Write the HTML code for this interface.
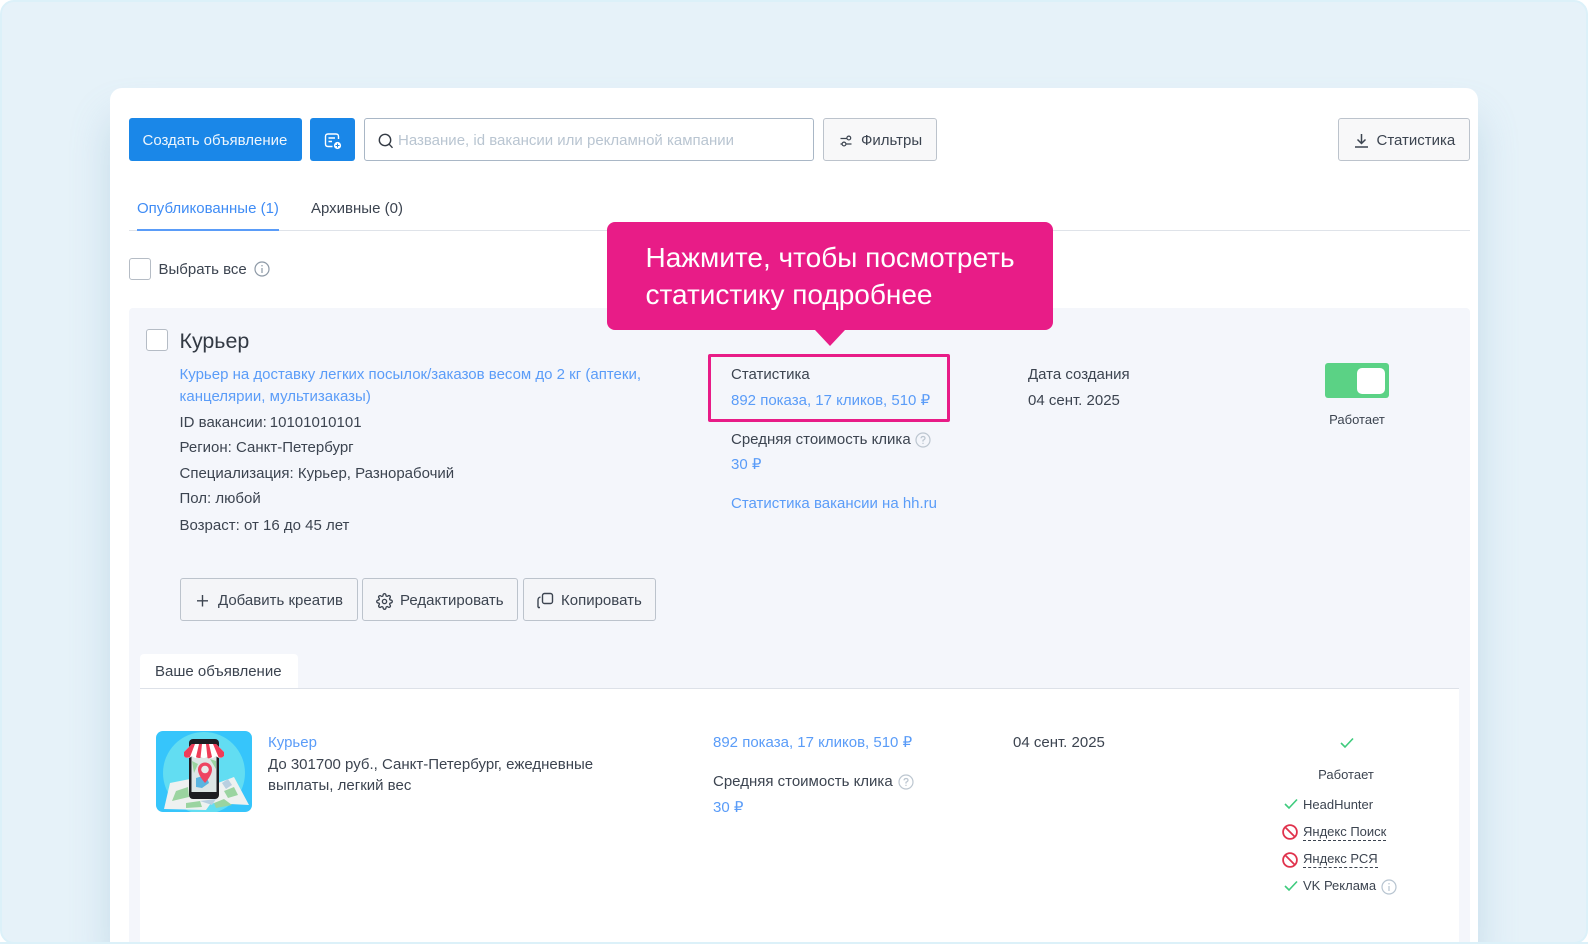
<!DOCTYPE html>
<html lang="ru"><head><meta charset="utf-8"><title>Объявления</title>
<style>
html,body{margin:0;padding:0;width:1588px;height:944px;overflow:hidden;background:#fff}
#root{position:relative;width:1588px;height:944px;overflow:hidden;background:#fff;font-family:"Liberation Sans",Arial,sans-serif;color:#3c4450;font-size:15px}
#bg{position:absolute;left:0;top:0;width:1584px;height:940px;border:2px solid #dcf1f9;border-radius:14px;background:#e6f2f9}
#card{position:absolute;left:110px;top:88px;width:1368px;height:854px;background:#fff;border-radius:12px 12px 0 0;box-shadow:0 30px 40px rgba(120,170,200,.3);clip-path:inset(-60px -60px 0 -60px)}
.t{position:absolute;white-space:nowrap;line-height:20px}
.l{color:#5a9cf8}
.s{font-size:13px}
.a{position:absolute;box-sizing:border-box}
.btn{position:absolute;box-sizing:border-box;border:1px solid #bcc3cc;border-radius:3px;background:#f8f8f9}
.blue{background:#1a87e8;border-radius:3px;position:absolute}
.cb{position:absolute;box-sizing:border-box;width:22px;height:22px;border:1px solid #b5bcc5;border-radius:3px;background:#fff}
svg{position:absolute;overflow:visible}
</style></head><body><div id="root">
<div id="bg"></div>
<div id="card"></div>

<div class="blue" style="left:129px;top:118px;width:173px;height:43px"></div>
<div class="t" style="left:142.5px;top:131px;color:#eef6fd">Создать объявление</div>
<div class="blue" style="left:310px;top:118px;width:45px;height:43px"></div>
<svg style="left:324px;top:133px" width="20" height="18" viewBox="0 0 20 18" fill="none" stroke="#fff" stroke-width="1.4"><path d="M14.5 6V3.5Q14.5 1 12 1H4Q1.500 1 1.500 3.500V11Q1.500 13.500 4 13.500H8.500"/><path d="M4.500 5H11M4.500 8.500H8"/><circle cx="13.500" cy="12.500" r="3.600" fill="#fff" stroke="none"/><path d="M13.500 10.500v4M11.500 12.500h4" stroke="#1a87e8" stroke-width="1"/></svg>

<div class="a" style="left:364px;top:118px;width:450px;height:43px;border:1px solid #a9b7c6;border-radius:3px;background:#fff"></div>
<svg style="left:378px;top:133px" width="16" height="16" viewBox="0 0 16 16" fill="none" stroke="#333a44" stroke-width="1.400"><circle cx="7" cy="7" r="5.700"/><path d="M11.200 11.200L14.500 14.800"/></svg>
<div class="t" style="left:398px;top:131px;color:#b9c5d1">Название, id вакансии или рекламной кампании</div>

<div class="btn" style="left:823px;top:118px;width:114px;height:43px"></div>
<svg style="left:840px;top:135px" width="12" height="12" viewBox="0 0 12 12" fill="none" stroke="#3c4450" stroke-width="1.200"><path d="M0.500 3.500H6.500M0.500 9H2M6 9H11.500"/><circle cx="8.800" cy="3" r="1.900"/><circle cx="4" cy="9" r="1.900"/></svg>
<div class="t" style="left:861px;top:131px">Фильтры</div>

<div class="btn" style="left:1338px;top:118px;width:132px;height:43px"></div>
<svg style="left:1354px;top:133px" width="15" height="15" viewBox="0 0 15 15" fill="none" stroke="#3c4450" stroke-width="1.500"><path d="M7.500 1V10M3.500 6.500L7.500 10.500L11.500 6.500M1 14H14"/></svg>
<div class="t" style="left:1376.500px;top:131px">Статистика</div>

<div class="t" style="left:137px;top:199px;color:#3f8cf5">Опубликованные (1)</div>
<div class="t" style="left:311px;top:199px">Архивные (0)</div>
<div class="a" style="left:129px;top:230px;width:1341px;height:1px;background:#dfe3e9"></div>
<div class="a" style="left:137px;top:229px;width:142px;height:2px;background:#5a9cf8"></div>

<div class="cb" style="left:129px;top:258px"></div>
<div class="t" style="left:158.500px;top:260px">Выбрать все</div>
<svg style="left:254px;top:261px" width="16" height="16" viewBox="0 0 16 16" fill="none" stroke="#8d99a6" stroke-width="1.200"><circle cx="8" cy="8" r="7"/><path d="M8 7V12M8 4V5.400"/></svg>

<div class="a" style="left:129px;top:308px;width:1341px;height:636px;background:#f4f6fb;border-radius:4px 4px 0 0"></div>
<div class="a" style="left:607px;top:222px;width:446px;height:108px;background:#e81c87;border-radius:8px"></div>
<svg style="left:815px;top:330px" width="30" height="16" viewBox="0 0 30 16"><path d="M0 0H30L15 16Z" fill="#e81c87"/></svg>
<div class="t" style="left:645.500px;top:240px;color:#fff;font-size:28px;line-height:36.500px">Нажмите, чтобы посмотреть<br>статистику подробнее</div>

<div class="cb" style="left:146px;top:329px"></div>
<div class="t" style="left:179.500px;top:330.500px;font-size:21.400px;color:#333a44">Курьер</div>
<div class="t l" style="left:179.500px;top:364px;line-height:22px">Курьер на доставку легких посылок/заказов весом до 2 кг (аптеки,<br>канцелярии, мультизаказы)</div>
<div class="t" style="left:179.500px;top:413px">ID вакансии:<span style="margin-left:3px">10101010101</span></div>
<div class="t" style="left:179.500px;top:438px">Регион: Санкт-Петербург</div>
<div class="t" style="left:179.500px;top:464px">Специализация: Курьер, Разнорабочий</div>
<div class="t" style="left:179.500px;top:489px">Пол: любой</div>
<div class="t" style="left:179.500px;top:516px">Возраст: от 16 до 45 лет</div>

<div class="a" style="left:708px;top:354px;width:242px;height:68px;border:3px solid #e81c87;border-radius:2px"></div>
<div class="t" style="left:731px;top:365px">Статистика</div>
<div class="t l" style="left:731px;top:391px">892 показа, 17 кликов, 510 ₽</div>
<div class="t" style="left:731px;top:430px">Средняя стоимость клика</div>
<svg style="left:915px;top:432px" width="16" height="16" viewBox="0 0 16 16" fill="none" stroke="#bcc6d0" stroke-width="1.200"><circle cx="8" cy="8" r="7"/><path d="M6 6.300Q6.200 4.500 8 4.500Q10 4.500 10 6.200Q10 7.300 8 8.300V9.600M8 10.800V12"/></svg>
<div class="t l" style="left:731px;top:455px">30 ₽</div>
<div class="t l" style="left:731px;top:494px">Статистика вакансии на hh.ru</div>
<div class="t" style="left:1028px;top:365px">Дата создания</div>
<div class="t" style="left:1028px;top:391px">04 сент. 2025</div>

<div class="a" style="left:1325px;top:363px;width:64px;height:35px;background:#5bd285;border-radius:3px"></div>
<div class="a" style="left:1357px;top:368px;width:28px;height:26px;background:#fff;border-radius:5px"></div>
<div class="t s" style="left:1319px;width:76px;text-align:center;top:410px">Работает</div>

<div class="btn" style="left:180px;top:578px;width:178px;height:43px;background:#f4f5f8"></div>
<svg style="left:196px;top:594px" width="13" height="13" viewBox="0 0 13 13" stroke="#3c4450" stroke-width="1.400"><path d="M6.500 1V12.500M1 6.800H12"/></svg>
<div class="t" style="left:218px;top:591px">Добавить креатив</div>
<div class="btn" style="left:362px;top:578px;width:156px;height:43px;background:#f4f5f8"></div>
<svg style="left:376px;top:593px" width="17" height="17" viewBox="0 0 24 24" fill="none" stroke="#3c4450" stroke-width="1.900"><circle cx="12" cy="12" r="3"/><path d="M19.400 15a1.650 1.650 0 0 0 .33 1.820l.06.06a2 2 0 0 1 0 2.830 2 2 0 0 1-2.830 0l-.06-.06a1.650 1.650 0 0 0-1.820-.33 1.650 1.650 0 0 0-1 1.510V21a2 2 0 0 1-2 2 2 2 0 0 1-2-2v-.09A1.650 1.650 0 0 0 9 19.400a1.650 1.650 0 0 0-1.820.33l-.06.06a2 2 0 0 1-2.830 0 2 2 0 0 1 0-2.830l.06-.06a1.650 1.650 0 0 0 .33-1.820 1.650 1.650 0 0 0-1.510-1H3a2 2 0 0 1-2-2 2 2 0 0 1 2-2h.09A1.650 1.650 0 0 0 4.600 9a1.650 1.650 0 0 0-.33-1.820l-.06-.06a2 2 0 0 1 0-2.830 2 2 0 0 1 2.830 0l.06.06a1.650 1.650 0 0 0 1.820.33H9a1.650 1.650 0 0 0 1-1.510V3a2 2 0 0 1 2-2 2 2 0 0 1 2 2v.09a1.650 1.650 0 0 0 1 1.510 1.650 1.650 0 0 0 1.820-.33l.06-.06a2 2 0 0 1 2.830 0 2 2 0 0 1 0 2.830l-.06.06a1.650 1.650 0 0 0-.33 1.820V9a1.650 1.650 0 0 0 1.510 1H21a2 2 0 0 1 2 2 2 2 0 0 1-2 2h-.09a1.650 1.650 0 0 0-1.510 1z"/></svg>
<div class="t" style="left:400px;top:591px">Редактировать</div>
<div class="btn" style="left:523px;top:578px;width:133px;height:43px;background:#f4f5f8"></div>
<svg style="left:537px;top:592px" width="17" height="17" viewBox="0 0 17 17" fill="none" stroke="#3c4450" stroke-width="1.400"><rect x="5.500" y="1.500" width="10" height="10" rx="2"/><path d="M3.500 5Q1 5.500 1 8V15.500M1 15.500H3"/></svg>
<div class="t" style="left:561px;top:591px">Копировать</div>

<div class="a" style="left:140px;top:654px;width:158px;height:35px;background:#fff;border-radius:4px 4px 0 0"></div>
<div class="t" style="left:155px;top:662px">Ваше объявление</div>
<div class="a" style="left:140px;top:688px;width:1319px;height:256px;background:#fff;border-top:1px solid #dde1e8"></div>

<svg style="left:156px;top:731px;overflow:hidden;border-radius:7px" width="96" height="81" viewBox="0 0 96 81">
<rect width="96" height="81" fill="#36c5fb"/>
<circle cx="48" cy="42" r="41" fill="#62ddf2"/>
<path d="M14 52L34 48L62 52L78 46L93 74L55 72L50 79L8 78Z" fill="#eef1f0"/>
<path d="M20 60L32 56L33 66L16 70ZM68 60L78 56L82 64L72 67ZM58 72L68 68L76 74L60 77ZM30 72L44 70L46 76L30 77Z" fill="#9ad4a0"/>
<path d="M66 52L72 48L76 54L70 58ZM44 70L60 68L56 74Z" fill="#b9cfe0"/>
<rect x="33" y="8" width="30" height="60" rx="4" fill="#1d1d22"/>
<rect x="35.500" y="25" width="25" height="36" fill="#dde6e6"/>
<path d="M40 47L50 44L53 52L46 57L40 56Z" fill="#5bb4e0"/>
<path d="M36 30L42 33L38 42ZM54 28L60 30L60 38Z" fill="#9ad4a0"/>
<path d="M28 21L36 13H60L68 21V25Q64 29 60 25Q56 29 52 25Q48 29 44 25Q40 29 36 25Q32 29 28 25Z" fill="#fff"/>
<path d="M28 21L36 13H39L34 26Q30 28 28 25ZM43 13H46L44.500 27Q41 27 40 26ZM50 13H53L56 26Q53 28 51.500 27ZM57 13H60L68 21V25Q65 28 62.500 26Z" fill="#ef3c58"/>
<path d="M49 52Q42 44 42 38.500A7 7 0 0 1 56 38.500Q56 44 49 52Z" fill="#ee4562"/>
<circle cx="49" cy="38.500" r="3.800" fill="#e9eded"/>
</svg>
<div class="t l" style="left:268px;top:733px">Курьер</div>
<div class="t" style="left:268px;top:753.500px;line-height:21.500px">До 301700 руб., Санкт-Петербург, ежедневные<br>выплаты, легкий вес</div>
<div class="t l" style="left:713px;top:733px">892 показа, 17 кликов, 510 ₽</div>
<div class="t" style="left:713px;top:772px">Средняя стоимость клика</div>
<svg style="left:898px;top:774px" width="16" height="16" viewBox="0 0 16 16" fill="none" stroke="#bcc6d0" stroke-width="1.200"><circle cx="8" cy="8" r="7"/><path d="M6 6.300Q6.200 4.500 8 4.500Q10 4.500 10 6.200Q10 7.300 8 8.300V9.600M8 10.800V12"/></svg>
<div class="t l" style="left:713px;top:798px">30 ₽</div>
<div class="t" style="left:1013px;top:733px">04 сент. 2025</div>

<svg style="left:1340px;top:737px" width="14" height="12" viewBox="0 0 14 12" fill="none" stroke="#3ecb7d" stroke-width="1.600"><path d="M1 6L5 10L13 1.500"/></svg>
<div class="t s" style="left:1306px;width:80px;text-align:center;top:765px">Работает</div>
<svg style="left:1284px;top:798px" width="14" height="12" viewBox="0 0 14 12" fill="none" stroke="#3ecb7d" stroke-width="1.600"><path d="M1 6L5 10L13 1.500"/></svg>
<div class="t s" style="left:1303px;top:794.500px">HeadHunter</div>
<svg style="left:1282px;top:824px" width="16" height="16" viewBox="0 0 16 16" fill="none" stroke="#e0324c" stroke-width="1.800"><circle cx="8" cy="8" r="6.900"/><path d="M3 3L13 13"/></svg>
<div class="t s" style="left:1303px;top:823px;line-height:17px;border-bottom:1px dashed #3c4450">Яндекс Поиск</div>
<svg style="left:1282px;top:852px" width="16" height="16" viewBox="0 0 16 16" fill="none" stroke="#e0324c" stroke-width="1.800"><circle cx="8" cy="8" r="6.900"/><path d="M3 3L13 13"/></svg>
<div class="t s" style="left:1303px;top:850px;line-height:17px;border-bottom:1px dashed #3c4450">Яндекс РСЯ</div>
<svg style="left:1284px;top:880px" width="14" height="12" viewBox="0 0 14 12" fill="none" stroke="#3ecb7d" stroke-width="1.600"><path d="M1 6L5 10L13 1.500"/></svg>
<div class="t s" style="left:1303px;top:876px">VK Реклама</div>
<svg style="left:1381px;top:879px" width="16" height="16" viewBox="0 0 16 16" fill="none" stroke="#b7c4d0" stroke-width="1.200"><circle cx="8" cy="8" r="7"/><path d="M8 7V12M8 4V5.400"/></svg>

<div class="a" style="left:0;top:942px;width:1588px;height:2px;background:#dcf1f9"></div>
</div></body></html>
